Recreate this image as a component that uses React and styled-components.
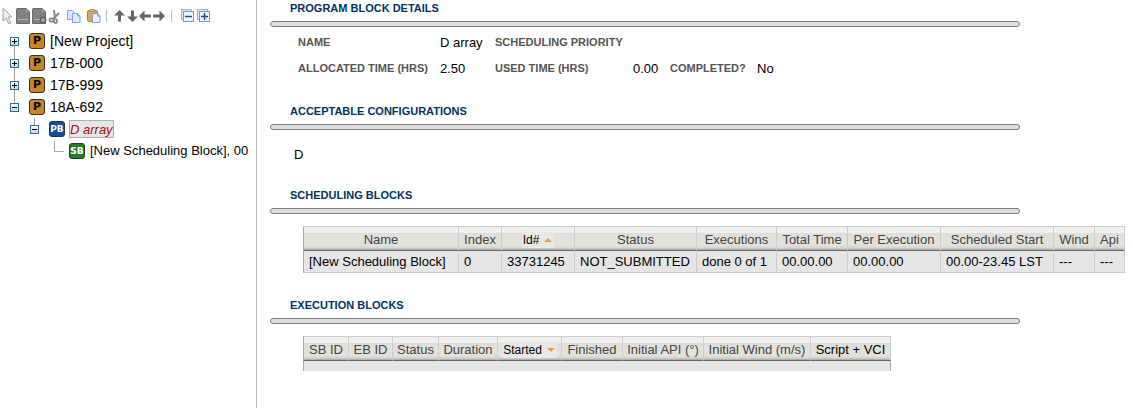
import React from "react"
import styled, { createGlobalStyle } from "styled-components"

const GlobalStyle = createGlobalStyle`
  * {
    box-sizing: border-box;
  }
  body {
    margin: 0;
    background: #fff;
    color: #000;
    font-family: "Liberation Sans", Arial, sans-serif;
    font-size: 13px;
  }
`

const Page = styled.div`
  display: flex;
  min-height: 100vh;
`
const SidePanel = styled.aside`
  flex: 0 0 257px;
  overflow: hidden;
  border-right: 1px solid #b8b8b8;
`
const Main = styled.main`
  flex: 1;
  min-width: 0;
  padding-left: 13px;
`

/* toolbar */
const Toolbar = styled.div`
  display: flex;
  align-items: center;
  gap: 4px;
  height: 30px;
  padding-top: 2px;
`
const ToolGroup = styled.div`
  display: flex;
  padding: 0 ${(props) => props.$pad || 0}px;
`
const ToolButton = styled.button`
  display: flex;
  justify-content: center;
  width: ${(props) => props.$width || 16}px;
  height: 18px;
  padding: 0;
  border: 0;
  background: none;

  svg {
    flex: none;
  }
`
const ToolSeparator = styled.span`
  width: 1px;
  height: 12px;
  background: #a9bbd3;
`

/* project tree */
const Tree = styled.ul`
  margin: 0;
  padding: 0;
  list-style: none;
`
const TreeRow = styled.li`
  display: flex;
  align-items: center;
  height: 22px;
  padding-left: ${(props) => 10 + props.$depth * 20}px;
  font-size: ${(props) => (props.$depth ? 13 : 14)}px;
  white-space: nowrap;
`
const lines = {
  down: "50% 100% / 1px 50%",
  both: "50% 0 / 1px 100%",
  up: "50% 0 / 1px 50%",
}
const Branch = styled.span`
  display: flex;
  align-items: center;
  flex: 0 0 9px;
  height: 22px;
  margin-right: 10px;
  background: linear-gradient(#999, #999) ${(props) => lines[props.$line]} no-repeat;
`
const Elbow = styled.span`
  flex: 0 0 10px;
  height: 11px;
  margin: 0 5px 10px 4px;
  border-left: 1px solid #aaa;
  border-bottom: 1px solid #aaa;
`
const Toggle = styled.button`
  display: flex;
  width: 9px;
  height: 9px;
  padding: 0;
  border: 1px solid #2a7197;
  background: linear-gradient(#fff, #d3d3d3);

  svg {
    flex: none;
  }
`
const badgeColors = {
  P: ["#c78428", "#000"],
  PB: ["#0d50a0", "#fff"],
  SB: ["#23801c", "#fff"],
}
const Badge = styled.span`
  flex: 0 0 16px;
  height: 16px;
  margin-right: 5px;
  border: 1px solid #333;
  border-radius: 3px;
  background: ${(props) => badgeColors[props.$kind][0]};
  color: ${(props) => badgeColors[props.$kind][1]};
  font-family: "DejaVu Sans", sans-serif;
  font-size: ${(props) => (props.$kind === "P" ? 11 : 9)}px;
  font-weight: bold;
  line-height: 14px;
  text-align: center;
`
const BadgeText = styled.span`
  display: flex;
  justify-content: center;
`
const TreeLabel = styled.span`
  line-height: 18px;
`
const SelectedLabel = styled.span`
  height: 18px;
  margin-left: -1px;
  border: 1px solid #b0b0b0;
  background: #e6e6e6;
  color: #a80d0d;
  font-style: italic;
  line-height: 18px;
`

/* sections */
const Section = styled.section`
  padding-bottom: 22px;
`
const SectionTitle = styled.h2`
  margin: 0 0 5px;
  padding-left: 20px;
  color: #003366;
  font-size: 11px;
  line-height: 16px;
  text-transform: uppercase;
`
const Rule = styled.div`
  max-width: 750px;
  height: 6px;
  border: 1px solid #808080;
  border-radius: 3px;
  background: #dedede;
`
const Details = styled.dl`
  display: grid;
  grid-template-columns: 142px 55px 138px 37px 87px auto;
  grid-auto-rows: 26px;
  align-items: center;
  margin: 0;
  padding: 2px 0 0 28px;
`
const Term = styled.dt`
  color: #555;
  font-size: 11px;
  font-weight: bold;
  text-transform: uppercase;
`
const Value = styled.dd`
  margin: 0;
`
const Configuration = styled.p`
  margin: 0;
  padding: 15px 0 0 24px;
  line-height: 20px;
`

/* tables */
const TableWrap = styled.div`
  padding: 12px 0 2px 33px;
`
const DataTable = styled.table`
  table-layout: fixed;
  width: 1px;
  border-collapse: separate;
  border-spacing: 0;
  white-space: nowrap;
`
const Col = styled.col`
  width: ${(props) => props.$width}px;
`
const HeadCell = styled.th`
  height: 25px;
  padding: 2px 4px 0;
  border: 1px solid #ccc;
  border-left-width: 0;
  border-bottom-color: #666;
  background: linear-gradient(
    #efefef 6px,
    #dfdfd8 6px,
    #e3e3dc 18px,
    #d6d6cf 21px,
    #a5a5a0 23px
  );
  color: ${(props) => (props.$strong ? "#000" : "#444")};
  font-weight: normal;
  line-height: 16px;
  text-align: center;

  &:first-child {
    border-left: 1px solid #aaa;
  }
`
const SortButton = styled.button`
  display: inline-flex;
  align-items: center;
  gap: 4px;
  height: 16px;
  padding: 0 1px;
  border: 0;
  background: #e8e8e6;
  color: #000;
  font: 12px "Liberation Sans", Arial, sans-serif;
  vertical-align: top;
`
const Cell = styled.td`
  height: 22px;
  padding: 0 4px 0 5px;
  border: 1px solid #ccc;
  border-width: 0 1px 1px 0;
  background: #e5e5e5;

  &:first-child {
    border-left: 1px solid #aaa;
  }
`
const EmptyCell = styled(Cell)`
  height: 10px;
  padding: 0;
  border-color: #aaa;
  border-bottom: 0;
`

const CursorIcon = () => (
  <svg width="15" height="18" viewBox="0 0 15 18">
    <path d="M3 1v13l3-3 3 6 2-1-3-6h4z" fill="#ececec" stroke="#a5a5a5" />
  </svg>
)

const DocIcon = ({ gear }) => (
  <svg width="16" height="18" viewBox="0 0 16 18">
    <path d="M2 1.5h9l3.5 3v12h-13v-14z" fill="#828282" stroke="#6a6a6a" />
    <path d="M11 2v3h3z" fill="#a5a5a5" />
    <path d="M3 12.5h10" stroke="#b5b5b5" />
    {gear && (
      <g>
        <circle cx="12" cy="13" r="3" fill="#777" stroke="#555" />
        <path d="M12 11v4M10 13h4" stroke="#bbb" />
      </g>
    )}
  </svg>
)

const ScissorsIcon = () => (
  <svg width="15" height="18" viewBox="0 0 15 18" fill="none" stroke="#858585">
    <path d="M7 3l1 8M12 6l-6 6" strokeWidth="2" />
    <ellipse cx="4.5" cy="13" rx="2" ry="1.7" strokeWidth="1.7" />
    <ellipse cx="8.5" cy="14" rx="1.5" ry="2" strokeWidth="1.7" />
  </svg>
)

const CopyIcon = () => (
  <svg width="16" height="18" viewBox="0 0 16 18" stroke="#7da7e0">
    <path d="M1.5 3.5h5l2 2v7h-7z" fill="#d5e5fb" />
    <path d="M6.5 6.5h5l2.5 2.5v6.5h-7.5z" fill="#e1edfd" />
    <path d="M11.5 6.5v2.5h2.5" fill="none" />
  </svg>
)

const PasteIcon = () => (
  <svg width="16" height="18" viewBox="0 0 16 18">
    <rect x="1.5" y="3.5" width="10" height="11" rx="1.5" fill="#dfa149" stroke="#bd7d2c" />
    <rect x="4" y="2.5" width="5" height="2" rx="1" fill="#e5d5b4" stroke="#a68a5b" />
    <path d="M6.5 6.5h5l2.5 2.5v6.5h-7.5z" fill="#e8f1fd" stroke="#7d9fd3" />
    <path d="M11.5 6.5v2.5h2.5" fill="none" stroke="#7d9fd3" />
  </svg>
)

const arrows = {
  up: "M6.5 3l5.5 5.5h-4v6h-3v-6h-4z",
  down: "M6.5 15l5.5-5.5h-4v-6h-3v6h-4z",
  left: "M0 9l5.5-5.5v4h6.5v3h-6.5v4z",
  right: "M13 9l-5.5-5.5v4h-6.5v3h6.5v4z",
}

const ArrowIcon = ({ direction }) => (
  <svg width="13" height="18" viewBox="0 0 13 18">
    <path d={arrows[direction]} fill="#666" />
  </svg>
)

const StackIcon = ({ plus }) => (
  <svg width="16" height="18" viewBox="0 0 16 18">
    <rect x="1.5" y="2.5" width="10" height="10" fill="#dbe7f3" stroke="#9bb7d4" />
    <rect x="3.5" y="4.5" width="10" height="10" fill="#eef7fd" stroke="#6c9bc6" />
    <path d="M5 9.5h7" stroke="#14508c" strokeWidth="1.5" />
    {plus && <path d="M8.5 6v7" stroke="#14508c" strokeWidth="1.5" />}
  </svg>
)

const SortIcon = ({ down }) => (
  <svg width="10" height="6" viewBox="0 0 10 6">
    <path d={down ? "M1 1h8l-4 4z" : "M1 5h8l-4-4z"} fill="#eba13a" />
  </svg>
)

const ExpandToggle = ({ open, name }) => (
  <Toggle aria-label={`${open ? "Collapse" : "Expand"} ${name}`}>
    <svg width="7" height="7" viewBox="0 0 7 7" stroke="#000">
      <path d={open ? "M1 3.5h5" : "M1 3.5h5M3.5 1v5"} />
    </svg>
  </Toggle>
)

const projects = [
  { name: "[New Project]", line: "down" },
  { name: "17B-000", line: "both" },
  { name: "17B-999", line: "both" },
  { name: "18A-692", line: "up", open: true },
]

const schedulingColumns = [
  { title: "Name", width: 156, value: "[New Scheduling Block]" },
  { title: "Index", width: 43, value: "0" },
  { title: "Id#", width: 73, value: "33731245", sort: "up" },
  { title: "Status", width: 122, value: "NOT_SUBMITTED" },
  { title: "Executions", width: 80, value: "done 0 of 1" },
  { title: "Total Time", width: 71, value: "00.00.00" },
  { title: "Per Execution", width: 93, value: "00.00.00" },
  { title: "Scheduled Start", width: 113, value: "00.00-23.45 LST" },
  { title: "Wind", width: 41, value: "---" },
  { title: "Api", width: 30, value: "---" },
]

const executionColumns = [
  { title: "SB ID", width: 46 },
  { title: "EB ID", width: 44 },
  { title: "Status", width: 46 },
  { title: "Duration", width: 59 },
  { title: "Started", width: 64, sort: "down" },
  { title: "Finished", width: 61 },
  { title: "Initial API (°)", width: 81 },
  { title: "Initial Wind (m/s)", width: 107 },
  { title: "Script + VCI", width: 80, strong: true },
]

const TableHead = ({ columns }) => (
  <>
    <colgroup>
      {columns.map((col) => (
        <Col key={col.title} $width={col.width} />
      ))}
    </colgroup>
    <thead>
      <tr>
        {columns.map((col) => (
          <HeadCell key={col.title} $strong={col.strong}>
            {col.sort ? (
              <SortButton>
                {col.title}
                <SortIcon down={col.sort === "down"} />
              </SortButton>
            ) : (
              col.title
            )}
          </HeadCell>
        ))}
      </tr>
    </thead>
  </>
)

const ProjectToolbar = () => (
  <Toolbar>
    <ToolGroup>
      <ToolButton $width={15} aria-label="Select">
        <CursorIcon />
      </ToolButton>
      <ToolButton aria-label="New">
        <DocIcon />
      </ToolButton>
      <ToolButton aria-label="New from template">
        <DocIcon gear />
      </ToolButton>
      <ToolButton $width={15} aria-label="Cut">
        <ScissorsIcon />
      </ToolButton>
    </ToolGroup>
    <ToolButton aria-label="Copy">
      <CopyIcon />
    </ToolButton>
    <ToolButton aria-label="Paste">
      <PasteIcon />
    </ToolButton>
    <ToolSeparator />
    <ToolGroup $pad={2}>
      {Object.keys(arrows).map((direction) => (
        <ToolButton key={direction} $width={13} aria-label={`Move ${direction}`}>
          <ArrowIcon direction={direction} />
        </ToolButton>
      ))}
    </ToolGroup>
    <ToolSeparator />
    <ToolGroup $pad={4}>
      <ToolButton aria-label="Collapse all">
        <StackIcon />
      </ToolButton>
      <ToolButton aria-label="Expand all">
        <StackIcon plus />
      </ToolButton>
    </ToolGroup>
  </Toolbar>
)

const TreeBadge = ({ kind }) => (
  <Badge $kind={kind}>
    <BadgeText>{kind}</BadgeText>
  </Badge>
)

const ProjectTree = () => (
  <Tree>
    {projects.map((project) => (
      <TreeRow key={project.name} $depth={0}>
        <Branch $line={project.line}>
          <ExpandToggle open={project.open} name={project.name} />
        </Branch>
        <TreeBadge kind="P" />
        <TreeLabel>{project.name}</TreeLabel>
      </TreeRow>
    ))}
    <TreeRow $depth={1}>
      <Branch $line="up">
        <ExpandToggle open name="D array" />
      </Branch>
      <TreeBadge kind="PB" />
      <SelectedLabel>D array</SelectedLabel>
    </TreeRow>
    <TreeRow $depth={2}>
      <Elbow />
      <TreeBadge kind="SB" />
      <TreeLabel>[New Scheduling Block], 00</TreeLabel>
    </TreeRow>
  </Tree>
)

const App = () => {
  return (
    <Page>
      <GlobalStyle />
      <SidePanel>
        <ProjectToolbar />
        <ProjectTree />
      </SidePanel>
      <Main>
        <Section>
          <SectionTitle>Program Block Details</SectionTitle>
          <Rule />
          <Details>
            <Term>Name</Term>
            <Value>D array</Value>
            <Term>Scheduling Priority</Term>
            <Value />
            <Term />
            <Value />
            <Term>Allocated Time (hrs)</Term>
            <Value>2.50</Value>
            <Term>Used Time (hrs)</Term>
            <Value>0.00</Value>
            <Term>Completed?</Term>
            <Value>No</Value>
          </Details>
        </Section>
        <Section>
          <SectionTitle>Acceptable Configurations</SectionTitle>
          <Rule />
          <Configuration>D</Configuration>
        </Section>
        <Section>
          <SectionTitle>Scheduling Blocks</SectionTitle>
          <Rule />
          <TableWrap>
            <DataTable>
              <TableHead columns={schedulingColumns} />
              <tbody>
                <tr>
                  {schedulingColumns.map((col) => (
                    <Cell key={col.title}>{col.value}</Cell>
                  ))}
                </tr>
              </tbody>
            </DataTable>
          </TableWrap>
        </Section>
        <Section>
          <SectionTitle>Execution Blocks</SectionTitle>
          <Rule />
          <TableWrap>
            <DataTable>
              <TableHead columns={executionColumns} />
              <tbody>
                <tr>
                  <EmptyCell colSpan={executionColumns.length} />
                </tr>
              </tbody>
            </DataTable>
          </TableWrap>
        </Section>
      </Main>
    </Page>
  )
}

export default App
